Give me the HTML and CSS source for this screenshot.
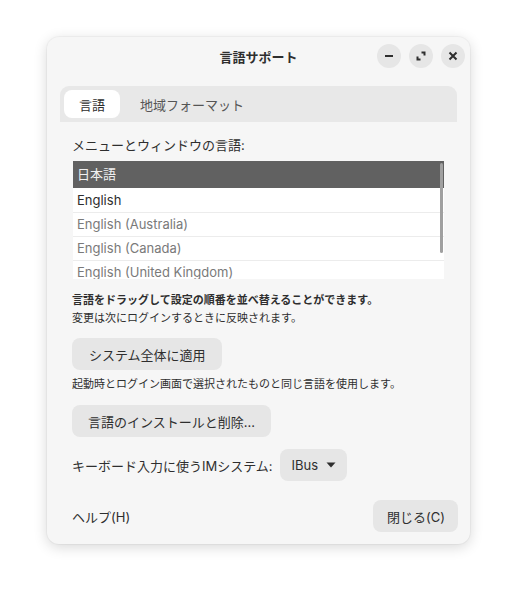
FILE: index.html
```html
<!DOCTYPE html>
<html lang="ja">
<head>
<meta charset="utf-8">
<title>言語サポート</title>
<link rel="stylesheet" href="styles.css">
</head>
<body>
<div class="window">
  <header class="headerbar">
    <div class="title">言語サポート</div>
    <div class="controls">
      <span class="ctl">
        <svg width="24" height="24" viewBox="0 0 24 24"><rect x="8" y="11" width="8" height="2" fill="#2e2e2e"/></svg>
      </span>
      <span class="ctl">
        <svg width="24" height="24" viewBox="0 0 24 24"><path d="M12.5 8.5h3v3M11.5 15.5h-3v-3" fill="none" stroke="#2e2e2e" stroke-width="2"/></svg>
      </span>
      <span class="ctl">
        <svg width="24" height="24" viewBox="0 0 24 24"><path d="M8.5 8.5l7 7M15.5 8.5l-7 7" fill="none" stroke="#2e2e2e" stroke-width="2"/></svg>
      </span>
    </div>
  </header>
  <main class="content">
    <nav class="tabs">
      <span class="tab active">言語</span>
      <span class="tab">地域フォーマット</span>
    </nav>
    <section class="page">
      <div class="label">メニューとウィンドウの言語:</div>
      <div class="list">
        <div class="row selected">日本語</div>
        <div class="row">English</div>
        <div class="row dim">English (Australia)</div>
        <div class="row dim">English (Canada)</div>
        <div class="row dim">English (United Kingdom)</div>
        <div class="scrollbar"></div>
      </div>
      <div class="hint">
        <div class="hint-bold">言語をドラッグして設定の順番を並べ替えることができます。</div>
        <div class="hint-text">変更は次にログインするときに反映されます。</div>
      </div>
      <button class="btn btn-apply">システム全体に適用</button>
      <div class="hint-text note">起動時とログイン画面で選択されたものと同じ言語を使用します。</div>
      <button class="btn btn-install">言語のインストールと削除...</button>
      <div class="im-row">
        <span>キーボード入力に使うIMシステム:</span>
        <button class="btn combo">IBus
          <svg width="10" height="6" viewBox="0 0 10 6"><path d="M0.5 0.5h9L5 5.5z" fill="#2e2e2e"/></svg>
        </button>
      </div>
      <div class="footer">
        <span class="help">ヘルプ(H)</span>
        <button class="btn close">閉じる(C)</button>
      </div>
    </section>
  </main>
</div>
</body>
</html>
```
FILE: styles.css
```css
* { box-sizing: border-box; }
html, body { margin: 0; padding: 0; }
body {
  background: #ffffff;
  font-family: "Inter", "Noto Sans CJK JP", sans-serif;
  color: #2e2e2e;
  font-size: 13px;
  width: 517px;
  height: 601px;
  overflow: hidden;
}
.window {
  margin: 37px 0 0 47px;
  width: 423px;
  height: 507px;
  background: #f6f6f6;
  border-radius: 12px;
  box-shadow: 0 3px 14px rgba(0,0,0,0.16), 0 0 0 1px rgba(0,0,0,0.03);
  display: flex;
  flex-direction: column;
}
.headerbar {
  height: 37px;
  display: flex;
  align-items: center;
  justify-content: center;
  position: relative;
}
.title {
  font-weight: 700;
  font-size: 13px;
  padding-top: 1px;
}
.controls {
  position: absolute;
  right: 5px;
  top: 7px;
  display: flex;
  gap: 8px;
}
.ctl {
  width: 24px;
  height: 24px;
  border-radius: 50%;
  background: #e6e6e6;
  display: flex;
}
.content {
  padding: 12px 13px 12px 13px;
  display: flex;
  flex-direction: column;
  flex: 1;
}
.tabs {
  height: 36px;
  background: #e8e8e8;
  border-radius: 9px 9px 0 0;
  padding: 4px;
  display: flex;
  gap: 5px;
  align-items: stretch;
}
.tab {
  padding: 0 15px;
  display: flex;
  align-items: center;
  color: #555555;
  border-radius: 8px;
}
.tab.active {
  background: #ffffff;
  color: #2e2e2e;
}
.page {
  padding: 0 0 0 12px;
  margin-right: -1px;
  display: flex;
  flex-direction: column;
  flex: 1;
}
.label {
  margin-top: 15px;
  line-height: 16px;
}
.list {
  margin: 8px 14px 0 1px;
  height: 118px;
  background: #ffffff;
  overflow: hidden;
  position: relative;
}
.row {
  height: 24px;
  line-height: 23px;
  padding-left: 4px;
  border-top: 1px solid #ececec;
  color: #2e2e2e;
}
.row.selected {
  height: 27px;
  line-height: 27px;
  border-top: 0;
  background: #616161;
  color: #f0f0f0;
}
.row.selected + .row { border-top: 0; line-height: 24px; }
.row.dim { color: #7a7a7a; }
.scrollbar {
  position: absolute;
  right: 1px;
  top: 2px;
  width: 3px;
  height: 90px;
  border-radius: 2px;
  background: #a0a0a0;
}
.hint { margin-top: 12px; }
.hint-bold {
  font-size: 11px;
  font-weight: 700;
  line-height: 18px;
}
.hint-text {
  font-size: 11px;
  line-height: 18px;
}
.btn {
  font-family: inherit;
  font-size: 13px;
  color: #2e2e2e;
  background: #e6e6e6;
  border: 0;
  border-radius: 8px;
  height: 32px;
  padding: 0 16px;
  align-self: flex-start;
}
.btn-apply { margin-top: 11px; padding: 0 16px 0 17px; }
.note { margin-top: 5px; }
.btn-install { margin-top: 12px; }
.im-row {
  margin-top: 12px;
  display: flex;
  align-items: center;
  gap: 7px;
}
.combo {
  display: flex;
  align-items: center;
  gap: 8px;
  padding: 0 11px 0 12px;
}
.footer {
  margin-top: auto;
  display: flex;
  justify-content: space-between;
  align-items: center;
}
.help { padding-left: 0; }
.close { padding: 0 13px 0 14px; }
```
